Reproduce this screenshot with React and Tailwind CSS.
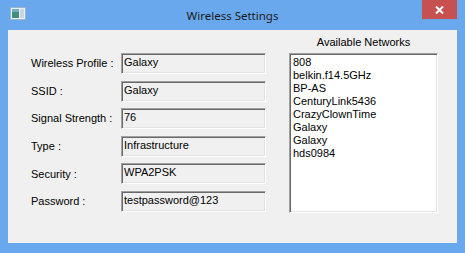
import React from "react";

const fields = [
  ["Wireless Profile :", "Galaxy"],
  ["SSID :", "Galaxy"],
  ["Signal Strength :", "76"],
  ["Type :", "Infrastructure"],
  ["Security :", "WPA2PSK"],
  ["Password :", "testpassword@123"],
];

const networks = [
  "808",
  "belkin.f14.5GHz",
  "BP-AS",
  "CenturyLink5436",
  "CrazyClownTime",
  "Galaxy",
  "Galaxy",
  "hds0984",
];

function AppIcon() {
  return (
    <svg width="16" height="13" viewBox="0 0 16 13">
      <rect x="0.5" y="0.5" width="15" height="12" fill="#e8eef4" stroke="#9fb3c8" />
      <rect x="2" y="2" width="7" height="9" fill="#3f8f7a" />
      <rect x="2" y="2" width="7" height="3" fill="#6fb0c8" />
      <rect x="10" y="2" width="4" height="9" fill="#c9d6e2" />
    </svg>
  );
}

export default function App() {
  return (
    <div
      className="w-[465px] h-[253px] bg-[#6aa8ee] flex flex-col overflow-hidden"
      style={{ fontFamily: '"Liberation Sans", Arial, sans-serif' }}
    >
      <div className="h-[30px] grid grid-cols-[1fr_auto_1fr] items-start">
        <div className="pl-[10px] pt-[7px]">
          <AppIcon />
        </div>
        <div
          className="pt-[7px] text-[11.5px] text-[#1a1a1a]"
          style={{ fontFamily: '"Noto Sans", "Open Sans", sans-serif' }}
        >
          Wireless Settings
        </div>
        <div className="flex justify-end pr-[8px]">
          <div className="w-[35px] h-[19px] bg-[#c75050] flex items-center justify-center">
            <svg width="9" height="8" viewBox="0 0 9 8">
              <path d="M1 0.5 L8 7.5 M8 0.5 L1 7.5" stroke="#ffffff" strokeWidth="2" />
            </svg>
          </div>
        </div>
      </div>
      <div className="mx-[8px] h-[213px] bg-[#f0f0f0] flex text-[11px] text-black">
        <div className="pl-[23px] pt-[23px] flex flex-col gap-[6.6px]">
          {fields.map(([label, value]) => (
            <div key={label} className="flex items-center h-[21px]">
              <div className="w-[90px]">{label}</div>
              <div className="w-[145px] h-[21px] border border-t-[#a0a0a0] border-l-[#a0a0a0] border-b-white border-r-white shadow-[inset_1px_1px_0_#696969,inset_-1px_-1px_0_#e3e3e3] pl-[2px] leading-[17px]">
                {value}
              </div>
            </div>
          ))}
        </div>
        <div className="ml-[23px] flex flex-col items-center">
          <div className="h-[23px] flex items-center text-[11px] pt-[1px]">
            Available Networks
          </div>
          <div className="w-[149px] h-[160px] bg-white border border-t-[#a0a0a0] border-l-[#a0a0a0] border-b-white border-r-white shadow-[inset_1px_1px_0_#696969,inset_-1px_-1px_0_#e3e3e3] pl-[3px] pt-[2px]">
            {networks.map((n, i) => (
              <div key={i} className="leading-[13px] h-[13px]">
                {n}
              </div>
            ))}
          </div>
        </div>
      </div>
    </div>
  );
}
